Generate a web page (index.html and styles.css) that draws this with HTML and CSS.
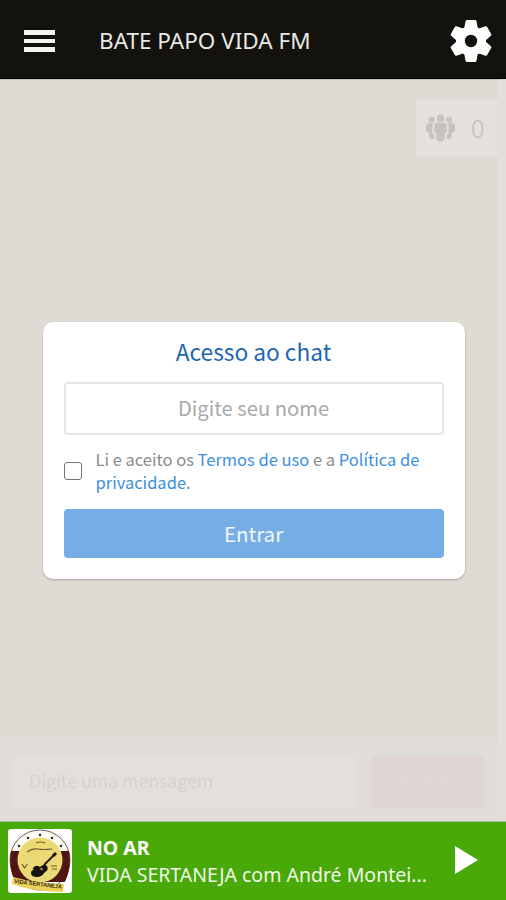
FILE: index.html
```
<!DOCTYPE html>
<html lang="pt-BR">
<head>
  <meta charset="UTF-8">
  <title>Bate Papo Vida FM</title>
  <link rel="stylesheet" href="styles.css">
</head>
<body>
  <header class="topbar">
    <button class="menu-btn" aria-label="Menu"><span></span><span></span><span></span></button>
    <h1>BATE PAPO VIDA FM</h1>
    <svg class="gear" viewBox="-21 -21 42 42">
      <g fill="#fff" stroke="#fff" stroke-width="3" stroke-linejoin="round">
        <circle r="13.500"/>
        <path d="M-4-19.500h8l1.500 8v23l-1.500 8h-8l-1.500-8v-23z"/>
        <path d="M-4-19.500h8l1.500 8v23l-1.500 8h-8l-1.500-8v-23z" transform="rotate(60)"/>
        <path d="M-4-19.500h8l1.500 8v23l-1.500 8h-8l-1.500-8v-23z" transform="rotate(120)"/>
      </g>
      <circle r="6.200" fill="#13120c"/>
    </svg>
  </header>

  <main class="chat">
    <div class="online">
      <svg class="people" viewBox="0 0 28 28">
        <circle cx="14" cy="4" r="3.6"/>
        <circle cx="5.6" cy="5.5" r="2.8"/>
        <circle cx="22.4" cy="5.5" r="2.8"/>
        <path d="M10.5 8.500h7q2.500 0 2.500 3v5.500q0 1.500-2 1.500v5q0 3-4 3t-4-3v-5q-2 0-2-1.500v-5.500q0-3 2.500-3z"/>
        <path d="M3 9h4q-.8 1.200-.8 3v6q0 1.500 2 2.300v3q-.7 1-2.400 1-2.600 0-2.600-2v-4.300q-3.200-.5-3.200-2.500v-3.500q0-3 3-3z"/>
        <path d="M25 9h-4q.8 1.200.8 3v6q0 1.500-2 2.300v3q.7 1 2.400 1 2.600 0 2.600-2v-4.300q3.200-.5 3.200-2.500v-3.500q0-3-3-3z"/>
      </svg>
      <span>0</span>
    </div>

    <form class="login">
      <h2>Acesso ao chat</h2>
      <input class="name" type="text" placeholder="Digite seu nome">
      <div class="terms">
        <span class="check" role="checkbox" aria-checked="false"></span>
        <p>Li e aceito os <a>Termos de uso</a> e a <a>Política de<br>privacidade</a>.</p>
      </div>
      <button class="enter" type="button">Entrar</button>
    </form>

    <div class="composer">
      <div class="message">Digite uma mensagem</div>
      <div class="send">Enviar</div>
    </div>
  </main>

  <footer class="player">
    <svg class="cover" viewBox="0 0 64 64">
      <rect width="64" height="64" rx="3" fill="#fff"/>
      <circle cx="32" cy="31" r="30" fill="#fdfcf4" stroke="#6a5a55" stroke-width="1"/>
      <path d="M3 22h58q3 16-4 31h-50q-7-15-4-31z" fill="#4e1513"/>
      <circle cx="32" cy="31" r="22.500" fill="#ead974"/>
      <g fill="#333">
        <circle cx="11" cy="17" r="1.300"/><circle cx="20" cy="9" r="1.300"/>
        <circle cx="32" cy="6" r="1.300"/><circle cx="44" cy="9" r="1.300"/>
        <circle cx="53" cy="17" r="1.300"/>
      </g>
      <path d="M19 23q5-4 11-3t14 0M28 14q4-2 9 0M14 35l2.500 4 3-4M43 37h6M44 40h5" fill="none" stroke="#6d5b27" stroke-width="1.200"/>
      <!-- guitar -->
      <path d="M36 36l10-10" stroke="#211512" stroke-width="1.800"/>
      <path d="M45 27l3-3" stroke="#211512" stroke-width="3"/>
      <path d="M25 39q3-4 7-1 4-4 7-1 2 4-2 6-3 5-8 5-6 0-6-4 0-3 3-3-2-1-1-2z" fill="#171311"/>
      <circle cx="33.500" cy="40" r="1.200" fill="#b99b4b"/>
      <path d="M5 48q25 7 51 7l-1 8q-28 0-51-8z" fill="#ead25a"/>
      <path d="M57 54q4-5 5-12" fill="none" stroke="#fff" stroke-width="1.500"/>
      <text class="cover-name" x="6" y="54" transform="rotate(7 6 54)" textLength="48" lengthAdjust="spacingAndGlyphs">VIDA SERTANEJA</text>
    </svg>
    <div class="track">
      <strong>NO AR</strong>
      <span>VIDA SERTANEJA com André Montei...</span>
    </div>
    <svg class="play" viewBox="0 0 23 28"><path d="M0 0l23 14L0 28z" fill="#fff"/></svg>
  </footer>
</body>
</html>
```

FILE: styles.css
```
* {
  box-sizing: border-box;
}

body {
  margin: 0;
  height: 900px;
  display: flex;
  flex-direction: column;
  overflow: hidden;
  background: #dedad4;
  font-family: "Noto Sans", "Open Sans", sans-serif;
}

h1, h2, p {
  margin: 0;
  font-weight: normal;
}

/* Top bar */
.topbar {
  height: 79px;
  flex: none;
  display: flex;
  align-items: center;
  padding: 4px 14px 0 24px;
  background: #13120c;
  border-bottom: 1px solid #000;
}

.menu-btn {
  width: 31px;
  padding: 0;
  border: 0;
  background: none;
  display: flex;
  flex-direction: column;
  gap: 4px;
}

.menu-btn span {
  height: 4.500px;
  background: #f4f4f2;
}

.topbar h1 {
  margin-left: 44px;
  padding-bottom: 1px;
  flex: 1;
  color: #e8e8e6;
  font-size: 22.500px;
  white-space: nowrap;
}

.gear {
  width: 42px;
  height: 42px;
}

/* Chat area */
.chat {
  flex: 1;
  display: flex;
  flex-direction: column;
  justify-content: space-between;
  border-top: 1px solid #c5c2bc;
  border-right: 8px solid #e2dfdb;
  font-family: "Noto Sans CJK SC", sans-serif;
}

.online {
  align-self: flex-end;
  width: 82px;
  height: 56px;
  margin-top: 20px;
  padding-left: 10px;
  display: flex;
  align-items: center;
  gap: 16px;
  background: #e4e0dc;
  color: #c0bdb9;
  font-size: 25px;
}

.online span {
  padding-bottom: 3px;
  font-weight: 300;
}

.people {
  width: 29px;
  height: 29px;
  fill: #c6c3bf;
}

/* Login box */
.login {
  align-self: center;
  width: 422px;
  height: 257px;
  margin: 85px 0 82px 9px;
  padding: 11px 21px 21px;
  background: #fff;
  border-radius: 10px;
  box-shadow: 0 1px 2px rgba(0, 0, 0, 0.25);
}

.login h2 {
  height: 38px;
  line-height: 38px;
  text-align: center;
  color: #1c66b2;
  font-size: 22.700px;
}

.name {
  display: block;
  width: 100%;
  height: 53px;
  margin-top: 11px;
  padding-bottom: 3px;
  border: 2px solid #e6e6e6;
  border-radius: 4px;
  text-align: center;
  font-family: inherit;
  font-size: 20.200px;
}

.name::placeholder {
  color: #a9a9a9;
}

.terms {
  height: 46px;
  margin-top: 13px;
  display: flex;
  align-items: center;
  gap: 14px;
  color: #8b8b8b;
  font-size: 16.500px;
  line-height: 23px;
}

.terms a {
  color: #3b8fe0;
}

.check {
  width: 18px;
  height: 18px;
  border: 1.500px solid #747474;
  border-radius: 3px;
}

.enter {
  width: 100%;
  height: 49px;
  margin-top: 15px;
  padding-bottom: 2px;
  border: 0;
  border-radius: 4px;
  background: #75ade4;
  color: #f3f8fd;
  font-family: inherit;
  font-size: 20.500px;
}

/* Message bar */
.composer {
  height: 80px;
  padding: 15px 14px 13px;
  display: flex;
  gap: 15px;
  background: #e0dcd7;
  font-size: 17.700px;
  line-height: 49px;
}

.message {
  width: 343px;
  padding-left: 15px;
  background: #e3e0dc;
  color: #d5d2ce;
}

.send {
  width: 112px;
  text-align: center;
  background: #dfd6d3;
  color: #e1dad6;
}

/* Player */
.player {
  height: 79px;
  flex: none;
  display: flex;
  align-items: center;
  padding: 0 28px 0 8px;
  border-top: 1px solid #a9bd98;
  background: #49a909;
  color: #fff;
}

.cover {
  width: 64px;
  height: 64px;
}

.cover-name {
  font: bold 6px "Liberation Sans", sans-serif;
  fill: #3b2a12;
}

.track {
  flex: 1;
  margin-left: 15px;
  display: flex;
  flex-direction: column;
  font-size: 19.500px;
  line-height: 27px;
  white-space: nowrap;
}

.track span {
  color: #eef7e8;
}

.play {
  width: 23px;
  height: 28px;
  margin-bottom: 2px;
}
```
